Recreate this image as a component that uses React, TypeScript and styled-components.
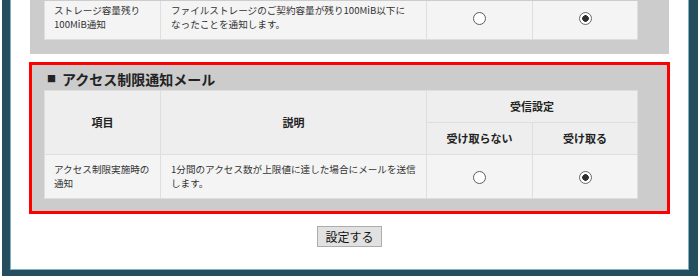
import React from 'react';
import styled, { createGlobalStyle } from 'styled-components';

const GlobalStyle = createGlobalStyle`
    html, body {
        margin: 0;
        padding: 0;
        background: #fff;
        font-family: "Noto Sans CJK JP", "Noto Sans", sans-serif;
        color: #333;
    }
`

const Frame = styled.div`
    margin-left: 2px;
    width: 696px;
    box-sizing: border-box;
    border: solid #244d5e;
    border-width: 0 9px 6px 8px;
`

const Inner = styled.div`
    background: #fff;
    border: solid #7fb0c6;
    border-width: 0 1px 1px 1px;
    padding-bottom: 22px;
`

const Panel = styled.section<{ $highlight?: boolean }>`
    margin: ${p => p.$highlight ? '9px' : '0'} 19px 0;
    background: #cccccc;
    padding: ${p => p.$highlight ? '0' : '1px'} 32px 14px 14px;
    ${p => p.$highlight && `
        outline: 3px solid #ff0000;
        outline-offset: -2px;
    `}
`

const Heading = styled.h2`
    margin: 0;
    height: 27px;
    padding-top: 5px;
    box-sizing: border-box;
    line-height: 22px;
    font-size: 14px;
    font-weight: bold;
    color: #222;
    display: flex;
    align-items: center;
    .mark {
        font-size: 9px;
        margin: 0 6px 0 3px;
        color: #222;
    }
`

const Table = styled.table`
    width: 593px;
    table-layout: fixed;
    border-collapse: collapse;
    th, td {
        border: 1px solid #dedede;
        box-sizing: border-box;
    }
    th {
        background: #eeeeee;
        height: 32px;
        font-size: 11px;
        font-weight: bold;
        color: #222;
        text-align: center;
        padding: 0;
    }
    td {
        background: #f4f4f4;
        font-size: 9.6px;
        line-height: 14px;
        vertical-align: middle;
        white-space: nowrap;
    }
`

const Row = styled.tr<{ $top?: boolean }>`
    td {
        height: ${p => p.$top ? '38px' : '44px'};
        padding: ${p => p.$top ? '1px 0 7px' : '0'};
    }
    ${p => p.$top && `
        td { border-top: none; }
    `}
`

const NameCell = styled.td`
    padding-left: 9px !important;
    padding-right: 4px !important;
`

const DescCell = styled.td`
    padding-left: 10px !important;
    padding-right: 8px !important;
`

const RadioCell = styled.td`
    text-align: center;
`

const Radio = styled.input.attrs({ type: 'radio' })`
    appearance: none;
    margin: 2px 0 0;
    width: 13px;
    height: 13px;
    box-sizing: border-box;
    border: 1px solid #5c5c5c;
    border-radius: 50%;
    background: #fff;
    vertical-align: middle;
    &:checked {
        border-color: #6a6a6a;
        background: radial-gradient(circle, #2f2f2f 0 3px, #fff 3.6px);
    }
`

const Actions = styled.div`
    display: flex;
    justify-content: center;
    margin-top: 13px;
`

const Button = styled.button`
    font-family: "Noto Sans CJK JP", sans-serif;
    font-size: 12px;
    height: 21px;
    line-height: 19px;
    padding: 0 7px;
    color: #111;
    background: #e1e1e1;
    border: 1px solid #adadad;
    border-radius: 0;
`

function Columns() {
    return (
        <colgroup>
            <col style={{ width: 116 }} />
            <col style={{ width: 266 }} />
            <col style={{ width: 106 }} />
            <col style={{ width: 105 }} />
        </colgroup>
    )
}

function App() {
    return (
    <>
        <GlobalStyle />
        <Frame>
            <Inner>
                <Panel>
                    <Table>
                        <Columns />
                        <tbody>
                            <Row $top>
                                <NameCell>ストレージ容量残り<br />100MiB通知</NameCell>
                                <DescCell>ファイルストレージのご契約容量が残り100MiB以下に<br />なったことを通知します。</DescCell>
                                <RadioCell><Radio name="storage" /></RadioCell>
                                <RadioCell><Radio name="storage" defaultChecked /></RadioCell>
                            </Row>
                        </tbody>
                    </Table>
                </Panel>
                <Panel $highlight>
                    <Heading><span className="mark">■</span>アクセス制限通知メール</Heading>
                    <Table>
                        <Columns />
                        <thead>
                            <tr>
                                <th rowSpan={2}>項目</th>
                                <th rowSpan={2}>説明</th>
                                <th colSpan={2}>受信設定</th>
                            </tr>
                            <tr>
                                <th>受け取らない</th>
                                <th>受け取る</th>
                            </tr>
                        </thead>
                        <tbody>
                            <Row>
                                <NameCell>アクセス制限実施時の<br />通知</NameCell>
                                <DescCell>1分間のアクセス数が上限値に達した場合にメールを送信<br />します。</DescCell>
                                <RadioCell><Radio name="access" /></RadioCell>
                                <RadioCell><Radio name="access" defaultChecked /></RadioCell>
                            </Row>
                        </tbody>
                    </Table>
                </Panel>
                <Actions>
                    <Button>設定する</Button>
                </Actions>
            </Inner>
        </Frame>
    </>)
}

export default App;
